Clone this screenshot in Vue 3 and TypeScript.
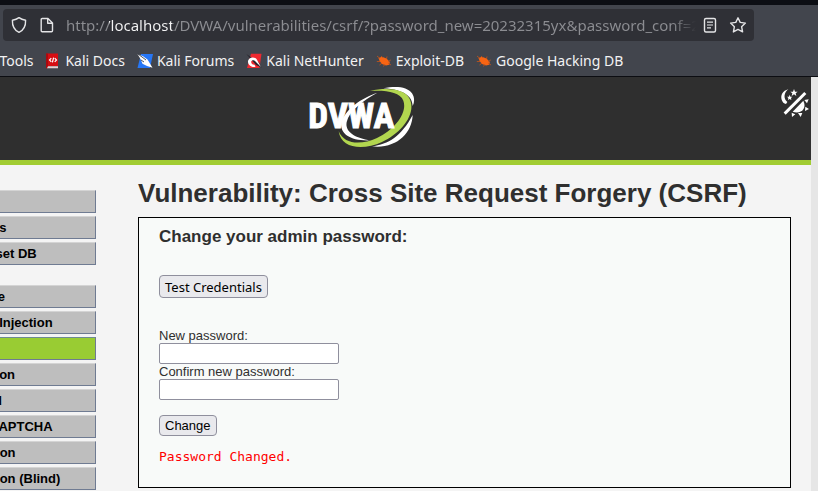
<script setup lang="ts">
import { ref } from 'vue'

type Icon = 'docs' | 'forums' | 'hunter' | 'bug'
interface Bookmark { label: string; icon?: Icon }

const address = ref('http://localhost/DVWA/vulnerabilities/csrf/?password_new=20232315yx&password_conf=20232315yx&Change=Change')
const newPassword = ref('')
const confirmPassword = ref('')

const bookmarks: Bookmark[] = [
  { label: 'Kali Tools' },
  { label: 'Kali Docs', icon: 'docs' },
  { label: 'Kali Forums', icon: 'forums' },
  { label: 'Kali NetHunter', icon: 'hunter' },
  { label: 'Exploit-DB', icon: 'bug' },
  { label: 'Google Hacking DB', icon: 'bug' },
]

const menu: string[][] = [
  ['Home', 'Instructions', 'Setup / Reset DB'],
  ['Brute Force', 'Command Injection', 'CSRF', 'File Inclusion', 'File Upload', 'Insecure CAPTCHA', 'SQL Injection', 'SQL Injection (Blind)'],
]
const current = 'CSRF'
</script>

<template>
  <div class="window">
    <div class="chrome">
      <div class="toolbar">
        <div class="urlbar">
          <button class="tool" type="button" aria-label="Tracking protection">
            <svg width="18" height="18" viewBox="0 0 18 18"><path d="M9 1.6 C7 3.2 4.8 3.9 2.4 4.2 C2.2 9.8 4 14 9 16.4 C14 14 15.8 9.8 15.6 4.2 C13.2 3.9 11 3.2 9 1.6Z" /></svg>
          </button>
          <button class="tool" type="button" aria-label="Site information">
            <svg width="18" height="18" viewBox="0 0 18 18"><path d="M4.2 2.5 H10 L14.5 7 V14.7 Q14.5 15.7 13.5 15.7 H4.2 Q3.2 15.7 3.2 14.7 V3.5 Q3.2 2.5 4.2 2.5Z M9.7 2.8 V7.3 H14.2" /></svg>
          </button>
          <input v-model="address" class="address" type="text" aria-label="Address" />
          <button class="tool" type="button" aria-label="Reader view">
            <svg width="18" height="18" viewBox="0 0 18 18"><rect x="3.5" y="2.5" width="11" height="13.5" rx="1.5" /><path class="thin" d="M6 6.2 H12 M6 9 H12 M6 11.8 H10" /></svg>
          </button>
          <button class="tool" type="button" aria-label="Bookmark this page">
            <svg width="18" height="18" viewBox="0 0 18 18"><path d="M9 1.8 L11.2 6.4 L16.4 7.1 L12.6 10.7 L13.6 15.9 L9 13.4 L4.4 15.9 L5.4 10.7 L1.6 7.1 L6.8 6.4Z" /></svg>
          </button>
        </div>
      </div>
      <nav class="bookmarks" aria-label="Bookmarks">
        <a v-for="b in bookmarks" :key="b.label" href="#">
          <svg v-if="b.icon" width="16" height="16" viewBox="0 0 16 16" aria-hidden="true">
            <g v-if="b.icon === 'docs'">
              <path d="M1.5 0.5 H13 V13 H3 V15.3 H1.5Z" fill="#d60d12" />
              <path d="M1 0.5 H3 V15 H1Z" fill="#a80b10" />
              <path d="M3 13.2 H13 V15.3 H2Z" fill="#e8cfd0" />
              <path d="M6.3 5.2 L4.5 7 L6.3 8.8 M9.7 5.2 L11.5 7 L9.7 8.8 M8.6 4.7 L7.4 9.3" fill="none" stroke="#fff" stroke-width="1.2" />
            </g>
            <g v-else-if="b.icon === 'forums'">
              <path d="M4 1 H16 L13 15 H0.5Z" fill="#2777f6" />
              <path d="M0.5 1 L6 3.2 L10.5 6.5 L15.5 14.8 L10 13 L5.5 10.8 L3.5 6Z" fill="#fff" />
              <path d="M1 1 L9 7 M4 7 L7 9" fill="none" stroke="#202632" stroke-width="0.8" />
            </g>
            <g v-else-if="b.icon === 'hunter'">
              <path d="M5 0.8 H15.5 L13.5 15 H1Z" fill="#ee2930" />
              <path d="M0.3 1 L13 9.5 L15.5 14.5 L10 12 Z" fill="#29232b" />
              <path d="M10.5 6 C7 2.6 1.5 5 2 9 C2.4 13 7 14.8 9.5 13.8 L8.5 11.8 C6.5 12 5 10.5 5.2 8.7 C5.5 7 8 6.5 9.5 8.5 L15 14 Z" fill="#fff" />
            </g>
            <g v-else>
              <path d="M2.5 5 L6 3.7 L10.5 5.5 L13.8 9 L13.2 11.7 L10 12.4 L6 11 L3.6 8Z" fill="#f76413" />
              <path d="M1 3 L4 5.5 M5 3 L7 5 M0.8 8.5 H4 M3.5 12 L6 10 M7.5 13.5 L9 11 M11 3.5 L10.5 6 M14.8 7 L12 8.5 M12 10 L15 12" fill="none" stroke="#c65419" stroke-width="0.8" />
            </g>
          </svg>
          <span>{{ b.label }}</span>
        </a>
      </nav>
    </div>

    <div class="viewport">
      <div class="page">
        <header class="banner">
          <svg class="logo" width="106" height="62" viewBox="57 30 318 186" role="img" aria-label="DVWA">
            <path d="M262 50 C216 66 166 98 155 138 C147 174 184 196 242 193 C198 187 164 169 170 138 C177 104 220 74 262 50Z" fill="#fff" />
            <path d="M280 37 C318 29 352 32 366 52 C374 64 374 78 368 90 C367 63 345 41 280 37Z" fill="#fff" />
            <path d="M368 117 C366 173 318 219 246 211 C295 205 334 181 368 117Z" fill="#fff" />
            <path d="M240 45 C290 34 342 38 358 67 C382 112 334 172 276 198 C220 224 153 219 146 166 C163 207 215 207 261 186 C315 160 353 110 340 74 C330 47 285 42 240 45Z" fill="#b2d64f" />
            <text x="55" y="157" class="wordmark">DVWA</text>
          </svg>
          <button class="theme" type="button" aria-label="Toggle theme">
            <svg width="30" height="30" viewBox="0 0 90 90">
              <path d="M25 4 C8 8 1 22 5 35 C7 42 12 47 18 48 L22 42 C9 33 12 12 25 4Z" />
              <path d="M42 3 L45 11 L53 11 L47 16 L49 24 L42 19 L35 24 L37 16 L31 11 L39 11Z" />
              <path d="M29 20 L31 26 L37 26 L33 30 L34 36 L29 33 L24 36 L25 30 L21 26 L27 26Z" />
              <path d="M14 77 L76 15" class="slash" />
              <path d="M70 38 C82 62 62 80 38 71Z" />
              <path d="M73 36 L86 34 L81 46Z M76 56 L87 63 L75 69Z M54 75 L67 75 L62 87Z M35 74 L46 79 L36 87Z" />
            </svg>
          </button>
        </header>

        <div class="columns">
          <nav class="menu" aria-label="Main menu">
            <ul v-for="(group, i) in menu" :key="i">
              <li v-for="item in group" :key="item">
                <a href="#" :class="{ selected: item === current }">{{ item }}</a>
              </li>
            </ul>
          </nav>

          <main>
            <h1>Vulnerability: Cross Site Request Forgery (CSRF)</h1>
            <section class="panel">
              <h3>Change your admin password:</h3>
              <button class="btn test" type="button">Test Credentials</button>
              <form @submit.prevent>
                <label for="new">New password:</label>
                <input id="new" v-model="newPassword" type="password" />
                <label for="confirm">Confirm new password:</label>
                <input id="confirm" v-model="confirmPassword" type="password" />
                <button class="btn change" type="submit">Change</button>
              </form>
              <pre>Password Changed.</pre>
            </section>
          </main>
        </div>
      </div>
    </div>
  </div>
</template>

<style>
body {
  margin: 0;
  background: #f4f4f4;
}
</style>

<style scoped>
.window {
  display: flex;
  flex-direction: column;
  min-height: 100vh;
  overflow: hidden;
  font-family: "Liberation Sans", Arial, sans-serif;
}
.chrome {
  border-top: 5px solid #0c0e14;
  border-bottom: 1px solid #0c0d12;
  background: #42454d;
  font-family: "Noto Sans", sans-serif;
  color: #f2f2f3;
}
.toolbar {
  padding: 4px 64px 4px 3px;
}
.urlbar {
  display: flex;
  align-items: center;
  height: 32px;
  padding: 0 7px;
  border-radius: 4px;
  background: #2f3036;
}
.tool {
  flex: none;
  display: flex;
  padding: 0;
  margin-right: 10px;
  border: 0;
  background: none;
}
.tool:last-child {
  margin-right: 0;
}
.tool svg {
  fill: none;
  stroke: #e4e4e6;
  stroke-width: 1.4;
  stroke-linejoin: round;
}
.tool .thin {
  stroke-width: 1.2;
}
.address {
  flex: 1;
  min-width: 0;
  height: 24px;
  margin-right: 5px;
  padding: 0;
  border: 0;
  outline: 0;
  font: 15px/24px "Noto Sans", sans-serif;
  color: transparent;
  background: linear-gradient(90deg, #8c8d92 43px, #f4f4f5 43px, #f4f4f5 106px, #8c8d92 106px);
  background-clip: text;
  -webkit-background-clip: text;
  mask-image: linear-gradient(to left, transparent, #000 24px);
}
.bookmarks {
  display: flex;
  gap: 12px;
  height: 31px;
  margin-left: -28px;
  align-items: center;
  white-space: nowrap;
  font-size: 14px;
}
.bookmarks a {
  display: flex;
  align-items: center;
  gap: 4px;
  color: inherit;
  text-decoration: none;
}
.viewport {
  flex: 1;
  display: flex;
  padding-right: 7px;
  background: #e6e6e6;
}
/* The page is scrolled sideways, so its left edge lies outside the window. */
.page {
  flex: 1;
  margin-left: -88px;
  background: #f4f4f4;
}
.banner {
  display: grid;
  grid-template-columns: 1fr auto 1fr;
  align-items: start;
  height: 74px;
  padding-top: 9px;
  border-bottom: 5px solid #a1cc33;
  background: #2f2f2f;
}
.logo {
  grid-column: 2;
}
.wordmark {
  font: bold 105px "Liberation Sans Narrow", "Roboto Condensed", "Open Sans", sans-serif;
  fill: #fff;
  stroke: #fff;
  stroke-width: 3px;
}
.theme {
  justify-self: end;
  display: flex;
  margin: 2px 1px 0 0;
  padding: 0;
  border: 0;
  background: none;
}
.theme svg {
  fill: #fff;
}
.slash {
  stroke: #fff;
  stroke-width: 9px;
}
.columns {
  display: flex;
  gap: 42px;
}
.menu {
  flex: none;
  width: 176px;
  padding: 25px 0 1px 8px;
}
.menu ul {
  display: flex;
  flex-direction: column;
  gap: 3px;
  margin: 0 0 20px;
  padding: 0;
  list-style: none;
}
.menu ul:last-child {
  margin-bottom: 0;
}
.menu a {
  display: block;
  height: 21px;
  padding-left: 11px;
  border: 1px solid #6f7b92;
  border-top-color: #d4d4d4;
  background: #bebebe;
  color: #000;
  font-size: 13px;
  font-weight: bold;
  line-height: 21px;
  text-decoration: none;
  white-space: nowrap;
}
.menu a.selected {
  border-top-color: #6f8b92;
  background: #99cc33;
}
main {
  flex: 1;
  min-width: 0;
  padding: 12px 20px 3px 0;
  color: #2f2f2f;
}
h1 {
  margin: 0 0 8px;
  font-size: 26px;
  line-height: 32px;
}
.panel {
  display: flex;
  flex-direction: column;
  align-items: flex-start;
  padding: 9px 20px 22px;
  border: 1px solid #000;
  background: #f8faf9;
  font-size: 13px;
}
h3 {
  margin: 0 0 28px;
  font-size: 17px;
  line-height: 20px;
}
.btn {
  padding: 0 5px;
  border: 1px solid #8f8f9d;
  border-radius: 4px;
  background: #e9e9ed;
  color: #000;
  font-family: "Liberation Sans", Arial, sans-serif;
  font-size: 13px;
}
.test {
  height: 23px;
  font-family: "Noto Sans", sans-serif;
}
form {
  display: flex;
  flex-direction: column;
  align-items: flex-start;
  margin-top: 30px;
}
label {
  line-height: 15px;
}
form input {
  box-sizing: border-box;
  width: 180px;
  height: 21px;
  border: 1px solid #8f8f9d;
  border-radius: 2px;
  background: #fff;
}
.change {
  height: 21px;
  margin-top: 15px;
}
pre {
  margin: 13px 0 0;
  color: #f00;
  font: 13px/16px "DejaVu Sans Mono", monospace;
}
</style>
